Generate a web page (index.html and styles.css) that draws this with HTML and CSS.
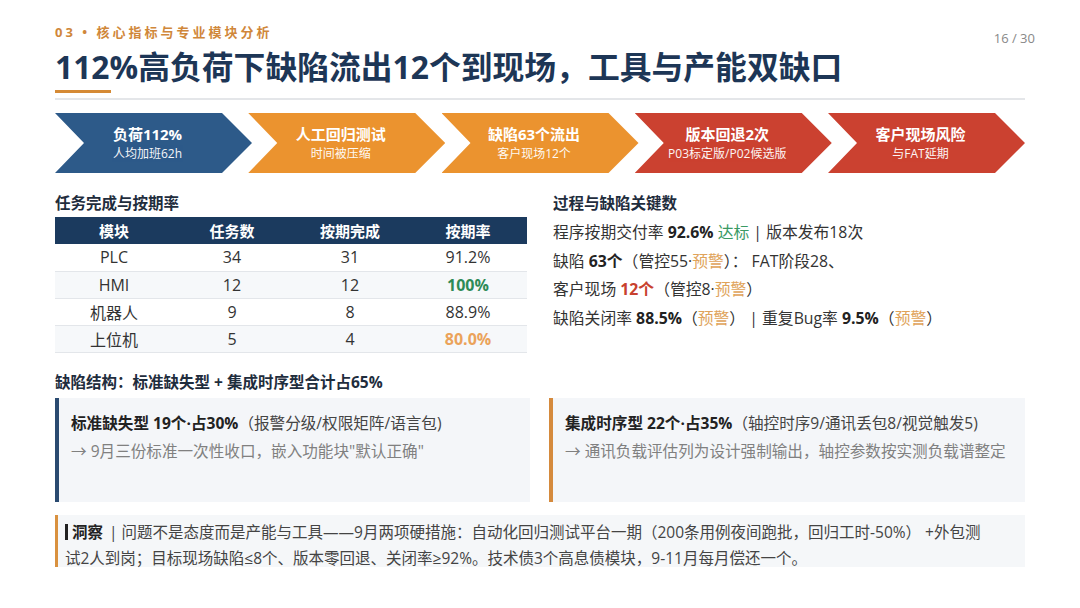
FILE: index.html
```html
<!DOCTYPE html>
<html lang="zh-CN">
<head>
<meta charset="utf-8">
<title>03 核心指标与专业模块分析</title>
<link rel="stylesheet" href="styles.css">
</head>
<body>
<div class="slide">
  <header class="head">
    <div class="head-top">
      <div class="kicker">03 • 核心指标与专业模块分析</div>
      <div class="pageno">16 / 30</div>
    </div>
    <h1 class="title">112%高负荷下缺陷流出12个到现场，工具与产能双缺口</h1>
    <div class="accent"></div>
    <div class="rule"></div>
  </header>

  <div class="flow">
    <div class="chev navy"><b>负荷112%</b><span>人均加班62h</span></div>
    <div class="chev orange"><b>人工回归测试</b><span>时间被压缩</span></div>
    <div class="chev orange"><b>缺陷63个流出</b><span>客户现场12个</span></div>
    <div class="chev red"><b>版本回退2次</b><span>P03标定版/P02候选版</span></div>
    <div class="chev red"><b>客户现场风险</b><span>与FAT延期</span></div>
  </div>

  <div class="two">
    <section>
      <h2 class="sub">任务完成与按期率</h2>
      <table class="tbl">
        <thead>
          <tr><th>模块</th><th>任务数</th><th>按期完成</th><th>按期率</th></tr>
        </thead>
        <tbody>
          <tr><td>PLC</td><td>34</td><td>31</td><td>91.2%</td></tr>
          <tr class="alt"><td>HMI</td><td>12</td><td>12</td><td class="good">100%</td></tr>
          <tr><td>机器人</td><td>9</td><td>8</td><td>88.9%</td></tr>
          <tr class="alt"><td>上位机</td><td>5</td><td>4</td><td class="warnv">80.0%</td></tr>
        </tbody>
      </table>
    </section>
    <section>
      <h2 class="sub">过程与缺陷关键数</h2>
      <ul class="kv">
        <li>程序按期交付率 <b>92.6%</b> <span class="ok">达标</span> | 版本发布18次</li>
        <li>缺陷 <b>63个</b>（管控55·<span class="wn">预警</span>）： FAT阶段28、</li>
        <li>客户现场 <b class="bad">12个</b>（管控8·<span class="wn">预警</span>）</li>
        <li>缺陷关闭率 <b>88.5%</b>（<span class="wn">预警</span>） | 重复Bug率 <b>9.5%</b>（<span class="wn">预警</span>）</li>
      </ul>
    </section>
  </div>

  <h2 class="sub struct">缺陷结构：标准缺失型 + 集成时序型合计占65%</h2>
  <div class="cards">
    <div class="card navyb">
      <p class="ct"><b>标准缺失型 19个·占30%</b>（报警分级/权限矩阵/语言包)</p>
      <p class="cd">→ 9月三份标准一次性收口，嵌入功能块"默认正确"</p>
    </div>
    <div class="card orangeb">
      <p class="ct"><b>集成时序型 22个·占35%</b>（轴控时序9/通讯丢包8/视觉触发5)</p>
      <p class="cd">→ 通讯负载评估列为设计强制输出，轴控参数按实测负载谱整定</p>
    </div>
  </div>

  <div class="insight">
    <span class="bar"></span><b class="lead">洞察</b> | 问题不是态度而是产能与工具——9月两项硬措施：自动化回归测试平台一期（200条用例夜间跑批，回归工时-50%） +外包测试2人到岗；目标现场缺陷≤8个、版本零回退、关闭率≥92%。技术债3个高息债模块，9-11月每月偿还一个。
  </div>
</div>
</body>
</html>
```

FILE: styles.css
```css
* { box-sizing: border-box; margin: 0; padding: 0; }
html, body { width: 1080px; height: 608px; background: #fff; overflow: hidden; }
body {
  font-family: "Open Sans", "Noto Sans CJK SC", sans-serif;
  color: #333;
}
.slide { padding: 22px 55px 0 55px; }

.head-top { display: flex; justify-content: space-between; align-items: flex-end; height: 20px; }
.kicker { font-size: 13px; font-weight: 700; color: #d0873a; letter-spacing: 3px; line-height: 20px; }
.pageno { font-size: 13px; color: #888; line-height: 20px; position: relative; top: 6px; right: -10px; }
.title { font-size: 31.8px; font-weight: 700; color: #1d3656; line-height: 44px; margin-top: 3px; }
.accent { width: 56px; height: 3px; background: #d58a35; margin-top: 1px; }
.rule { height: 2px; background: #e4e6e9; margin-top: 5px; }

.flow { display: flex; margin-top: 13px; height: 60px; }
.chev {
  width: 197px; height: 60px; margin-right: -3.75px;
  clip-path: polygon(0 0, calc(100% - 30px) 0, 100% 50%, calc(100% - 30px) 100%, 0 100%, 29px 50%);
  display: flex; flex-direction: column; align-items: center; justify-content: center;
  color: #fff; padding: 0 28px 0 16px;
}
.chev:last-child { margin-right: 0; }
.chev b { font-size: 15px; font-weight: 700; line-height: 21px; }
.chev span { font-size: 12px; line-height: 18px; opacity: 0.95; white-space: nowrap; }
.navy { background: #2d5a89; }
.orange { background: #eb932f; }
.red { background: #cb4130; }

.two { display: grid; grid-template-columns: 472px 472px; column-gap: 26px; margin-top: 20px; }
.sub { font-size: 15.5px; font-weight: 700; color: #1f2d3d; line-height: 20px; }
.tbl { width: 100%; border-collapse: collapse; margin-top: 4px; font-size: 16px; }
.tbl th { background: #1b3a5e; color: #fff; font-weight: 700; height: 27px; text-align: center; padding: 0; font-size: 15px; }
.tbl td { height: 27px; text-align: center; padding: 0; border-bottom: 1px solid #e3e6ea; color: #333; }
.tbl tr.alt td { background: #f6f8fa; }
.tbl th, .tbl td { width: 25%; }
.good { color: #2e8b57 !important; font-weight: 700; }
.warnv { color: #eba35a !important; font-weight: 700; }

.kv { list-style: none; margin-top: 5px; }
.kv li { font-size: 15.8px; line-height: 28.5px; color: #333; white-space: nowrap; }
.kv b { font-weight: 700; color: #222; }
.kv .ok { color: #3a9a64; }
.kv .wn { color: #e0a35a; }
.kv .bad { color: #c8412e; }

.struct { margin-top: 19px; }
.cards { display: grid; grid-template-columns: 475px 476px; column-gap: 19px; margin-top: 6px; }
.card { height: 104px; background: #f4f6f9; padding: 11px 12px 0 12px; }
.navyb { border-left: 4px solid #2a4a70; }
.orangeb { border-left: 4px solid #d58a3d; }
.ct { font-size: 15.6px; line-height: 28px; color: #444; white-space: nowrap; }
.ct b { color: #222; font-weight: 700; }
.cd { font-size: 15.6px; line-height: 29px; color: #808080; white-space: nowrap; }

.insight {
  margin-top: 13px; border-left: 3px solid #d9913f; background: #f5f7f9;
  font-size: 15.5px; line-height: 26px; color: #444; padding: 4px 44px 0 7px; height: 52px;
}
.insight .bar { display: inline-block; width: 3px; height: 16px; background: #222; vertical-align: -2px; margin-right: 4px; }
.insight .lead { color: #222; font-weight: 700; margin-right: 2px; }
```
